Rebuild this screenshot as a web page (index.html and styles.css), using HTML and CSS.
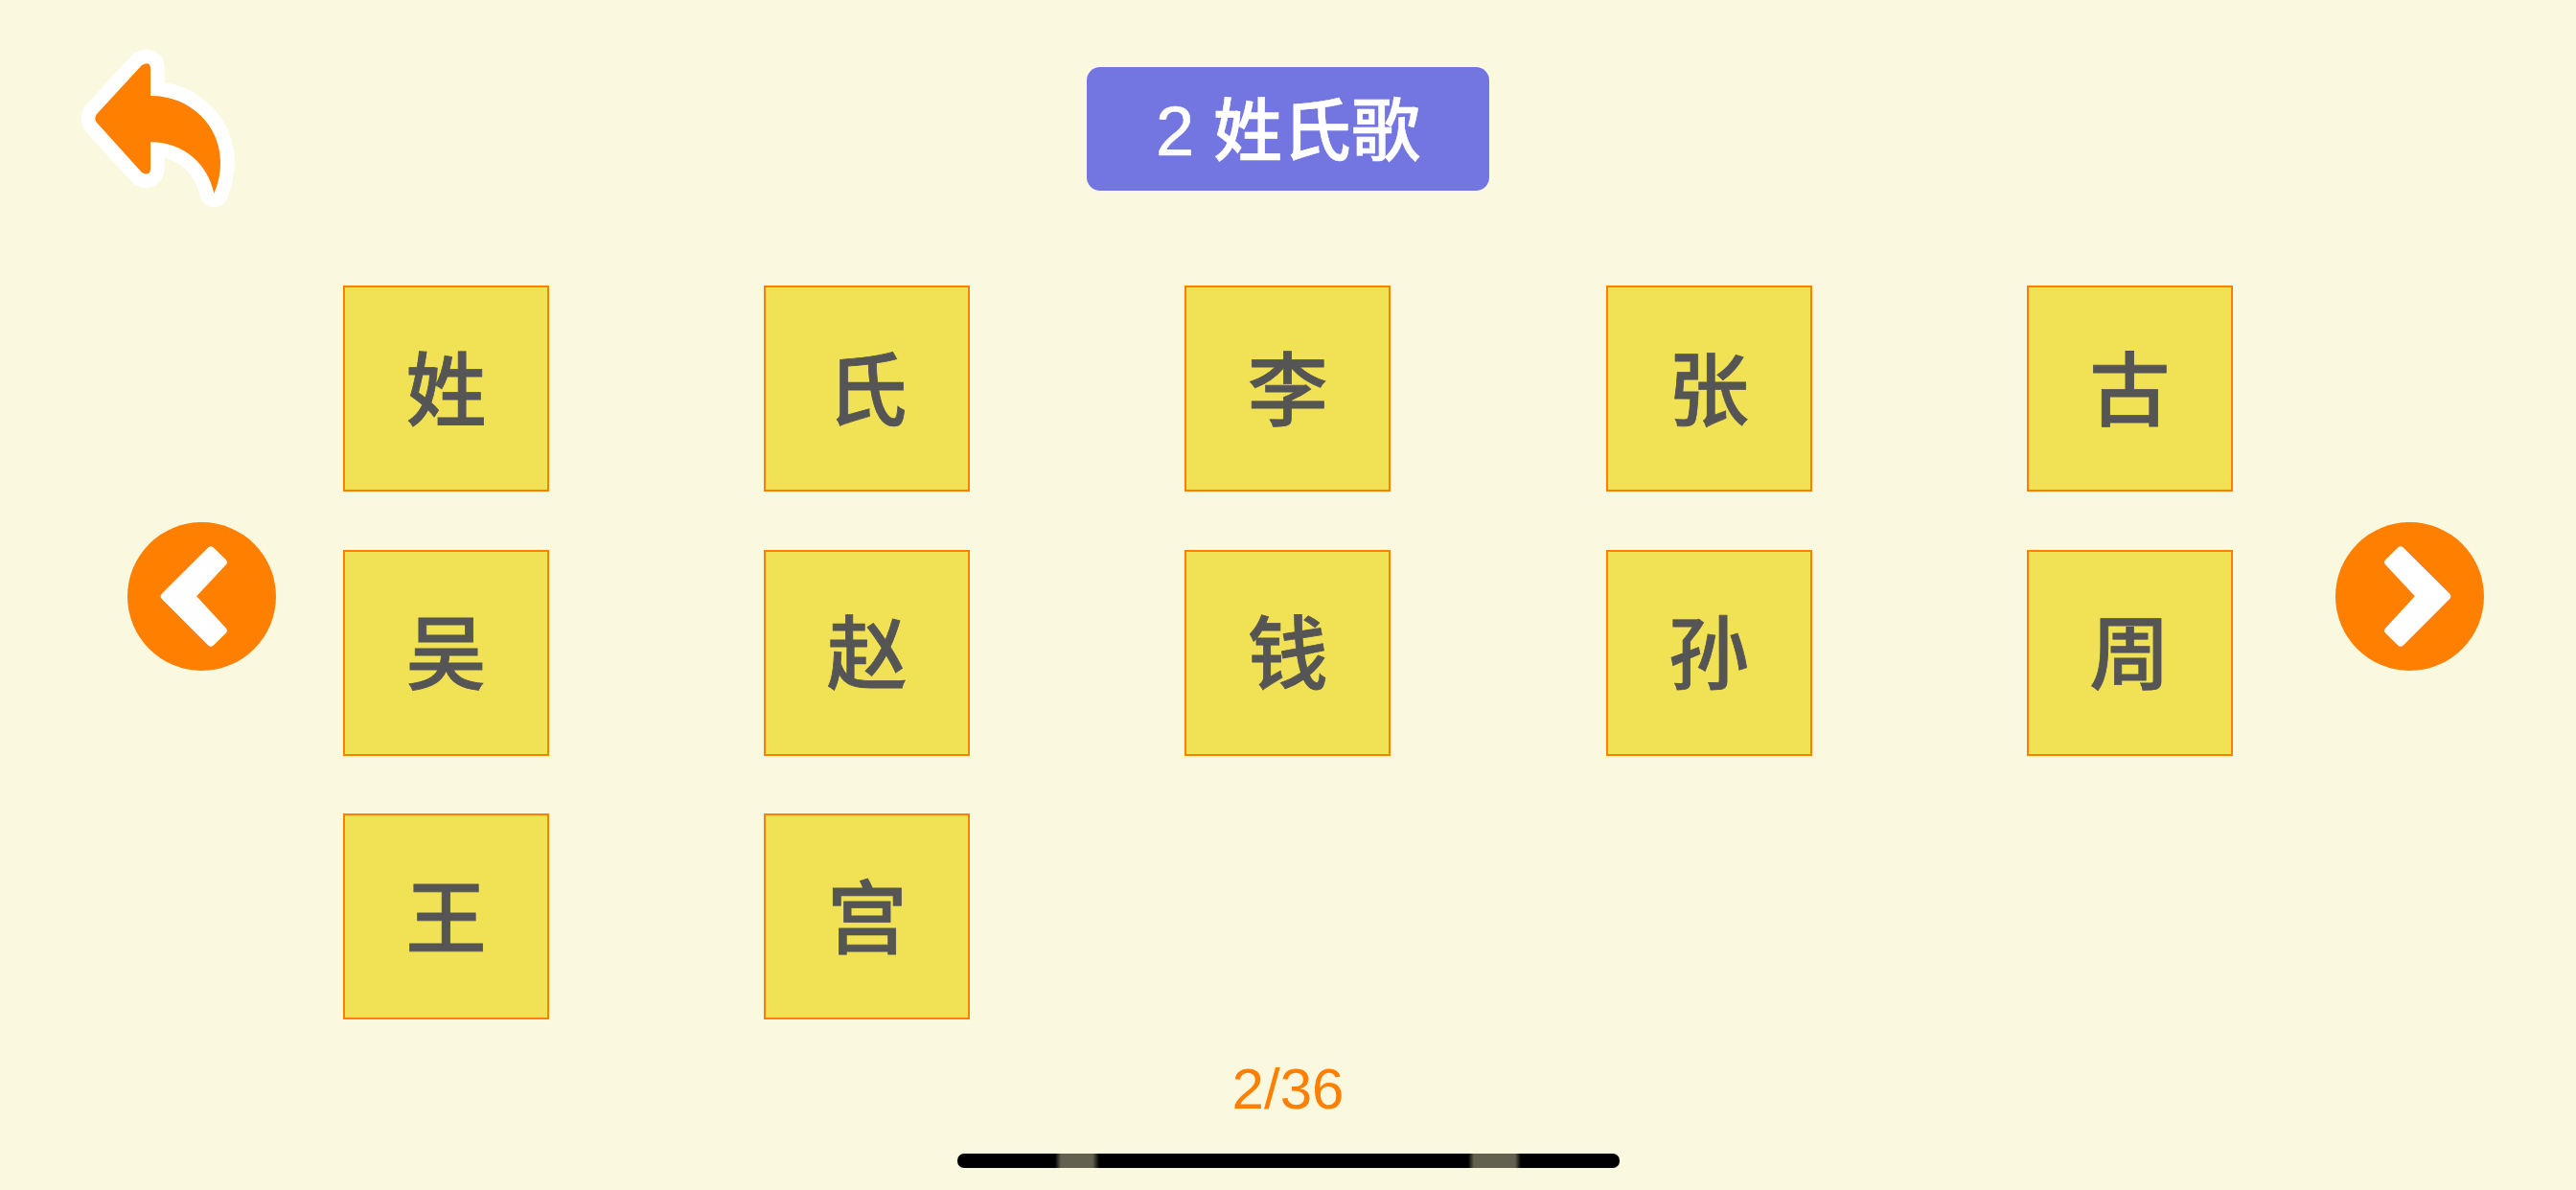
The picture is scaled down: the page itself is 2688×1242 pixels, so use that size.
FILE: index.html
```html
<!DOCTYPE html>
<html lang="zh-CN">
<head>
    <meta charset="UTF-8">
    <title>姓氏歌</title>
    <link rel="stylesheet" href="styles.css">
</head>
<body>
    <div class="page">
        <header class="header">
            <svg class="back" viewBox="60 54 510 522" aria-label="返回">
                <path class="back-arrow" d="M264 117 Q290 103 291 127 L291 213 C420 213 510 310 510 420 C510 460 502 490 490 518 C470 430 400 358 291 358 L291 443 Q288 466 264 453 L123 297 Q113 284 123 270 Z"/>
            </svg>
            <h1 class="title">2 姓氏歌</h1>
        </header>

        <main class="main">
            <svg class="nav nav-prev" viewBox="112 72 463 463" aria-label="上一页">
                <circle class="nav-disc" cx="343.500" cy="303.500" r="231.500"/>
                <path class="nav-mark" d="M315 160 L459 303 L315 447 L277 410 L376 303 L277 197 Z"/>
            </svg>

            <div class="grid">
                <div class="tile">姓</div>
                <div class="tile">氏</div>
                <div class="tile">李</div>
                <div class="tile">张</div>
                <div class="tile">古</div>
                <div class="tile">吴</div>
                <div class="tile">赵</div>
                <div class="tile">钱</div>
                <div class="tile">孙</div>
                <div class="tile">周</div>
                <div class="tile">王</div>
                <div class="tile">宫</div>
            </div>

            <svg class="nav nav-next" viewBox="112 72 463 463" aria-label="下一页">
                <circle class="nav-disc" cx="343.500" cy="303.500" r="231.500"/>
                <path class="nav-mark" d="M315 160 L459 303 L315 447 L277 410 L376 303 L277 197 Z"/>
            </svg>
        </main>

        <footer class="footer">
            <div class="counter">2/36</div>
            <div class="home-bar"></div>
        </footer>
    </div>
</body>
</html>
```

FILE: styles.css
```css
body {
    margin: 0;
    background-color: #fbf8e0;
    font-family: "Liberation Sans", "Noto Sans CJK SC", sans-serif;
}

.page {
    width: 2688px;
    height: 1242px;
    overflow: hidden;
}

.header {
    display: grid;
    grid-template-columns: 1134px 420px;
    height: 298px;
}

.back {
    width: 170px;
    height: 174px;
    margin: 47px 0 0 80px;
}

.back-arrow {
    fill: #ff8000;
    stroke: #fff;
    stroke-width: 88px;
    stroke-linejoin: round;
    paint-order: stroke;
}

.title {
    display: flex;
    align-items: center;
    justify-content: center;
    box-sizing: border-box;
    height: 129px;
    margin: 70px 0 0;
    padding-bottom: 8px;
    border-radius: 14px;
    background-color: #7375e0;
    color: #fff;
    font-size: 72px;
    font-weight: 500;
    -webkit-text-stroke: 0.6px #fff;
}

.main {
    display: flex;
    align-items: flex-start;
    height: 765px;
    padding-left: 133px;
}

.nav {
    flex: none;
    width: 155px;
    height: 155px;
    margin-top: 247px;
}

.nav-prev {
    transform: scaleX(-1);
}

.nav-disc {
    fill: #ff8000;
}

.nav-mark {
    fill: #fff;
    stroke: #fff;
    stroke-width: 24px;
    stroke-linejoin: round;
}

.grid {
    display: grid;
    grid-template-columns: repeat(5, 215px);
    grid-auto-rows: 215px;
    column-gap: 224.2px;
    row-gap: 60.5px;
    width: 1972px;
    margin: 0 107px 0 70px;
}

.tile {
    display: flex;
    align-items: center;
    justify-content: center;
    box-sizing: border-box;
    padding-bottom: 9px;
    border: 2px solid #ff8000;
    background-color: #f0e254;
    color: #555;
    font-size: 84px;
    font-weight: 500;
    -webkit-text-stroke: 0.8px #555;
}

.footer {
    display: flex;
    flex-direction: column;
    align-items: center;
    padding-top: 39px;
}

.counter {
    height: 70px;
    color: #ff8000;
    font-size: 60px;
    line-height: 70px;
}

.home-bar {
    width: 691px;
    height: 15px;
    margin-top: 32px;
    border-radius: 7px;
    background: linear-gradient(90deg,
        #000 102px, #62614f 108px, #62614f 141px, #000 148px,
        #000 533px, #62614f 539px, #62614f 582px, #000 588px);
}
```
